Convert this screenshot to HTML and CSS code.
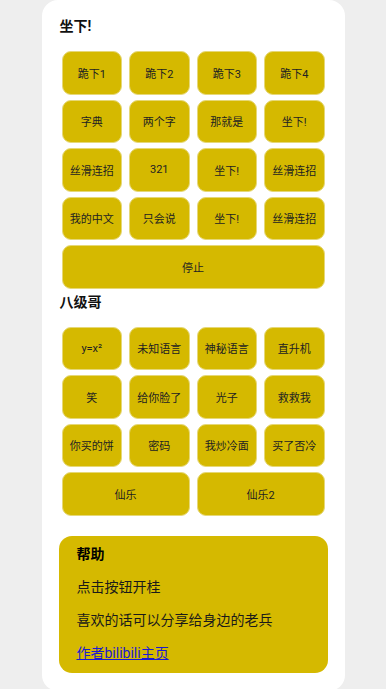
FILE: index.html
```html
<!DOCTYPE html>
<html lang="zh">
<head>
  <meta charset="UTF-8">
  <meta name="viewport" content="width=device-width, initial-scale=1.0">
  <title>坐下</title>
  <link rel="stylesheet" href="styles.css">
</head>
<body>

<div class="card">
  <!-- 坐下 -->
  <h2 class="title">坐下!</h2>
  <div class="grid">
    <button class="btn">跪下1</button>
    <button class="btn">跪下2</button>
    <button class="btn">跪下3</button>
    <button class="btn">跪下4</button>
    <button class="btn">字典</button>
    <button class="btn">两个字</button>
    <button class="btn">那就是</button>
    <button class="btn">坐下!</button>
    <button class="btn">丝滑连招</button>
    <button class="btn">321</button>
    <button class="btn">坐下!</button>
    <button class="btn">丝滑连招</button>
    <button class="btn">我的中文</button>
    <button class="btn">只会说</button>
    <button class="btn">坐下!</button>
    <button class="btn">丝滑连招</button>
    <button class="btn full">停止</button>
  </div>

  <!-- 八级哥 -->
  <h2 class="title">八级哥</h2>
  <div class="grid">
    <button class="btn">y=x²</button>
    <button class="btn">未知语言</button>
    <button class="btn">神秘语言</button>
    <button class="btn">直升机</button>
    <button class="btn">笑</button>
    <button class="btn">给你脸了</button>
    <button class="btn">光子</button>
    <button class="btn">救救我</button>
    <button class="btn">你买的饼</button>
    <button class="btn">密码</button>
    <button class="btn">我炒冷面</button>
    <button class="btn">买了否冷</button>
    <button class="btn half">仙乐</button>
    <button class="btn half">仙乐2</button>
  </div>

  <div class="help">
    <p class="help-title">帮助</p>
    <p>点击按钮开桂</p>
    <p>喜欢的话可以分享给身边的老兵</p>
    <p><a href="#">作者bilibili主页</a></p>
  </div>
</div>

</body>
</html>
```

FILE: styles.css
```css
body {
  margin: 0;
  background-color: #eeeeee;
  font-family: Roboto, "Noto Sans CJK SC", sans-serif;
}

.card {
  width: 303px;
  margin: 0 auto;
  padding: 16px 20px 18px;
  box-sizing: border-box;
  background-color: #fff;
  border-radius: 16px;
}

.title {
  margin: 0 0 15px -2px;
  font-size: 14px;
  line-height: 20px;
  font-weight: bold;
  color: #111;
}

.grid {
  display: grid;
  grid-template-columns: repeat(4, 1fr);
  gap: 5px 7px;
  margin-bottom: 3px;
}

.btn {
  height: 43.5px;
  padding: 0;
  border: 1px solid #e6d877;
  border-radius: 9px;
  background-color: #d5b900;
  color: #222;
  font-family: Roboto, "Noto Sans CJK SC", sans-serif;
  font-size: 11px;
}

.full {
  grid-column: span 4;
}

.half {
  grid-column: span 2;
}

/* help box */
.help {
  margin: 20px -3px 0;
  padding: 9px 18px 10px;
  display: flex;
  flex-direction: column;
  gap: 14px;
  background-color: #d5b900;
  border-radius: 13px;
}

.help p {
  margin: 0;
  font-size: 14px;
  line-height: 19px;
  color: #1a1a1a;
}

.help .help-title {
  font-weight: bold;
  color: #000;
}

.help a {
  color: #1a1ad2;
}
```
